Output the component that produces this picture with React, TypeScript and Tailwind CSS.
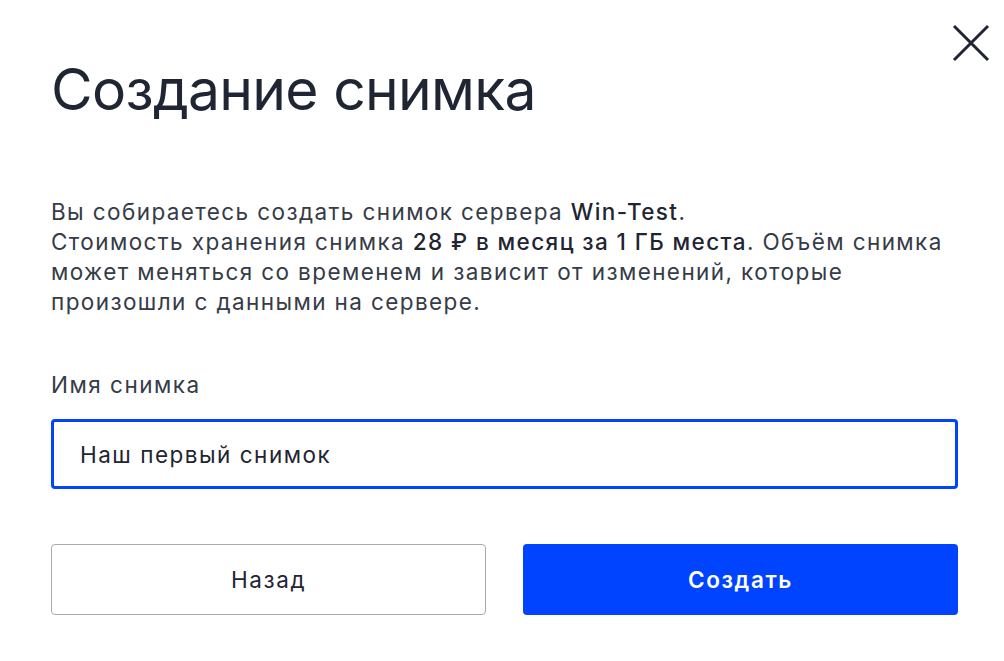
import { useState } from 'react';

export default function App() {
  const [name, setName] = useState('Наш первый снимок');

  return (
    <div className="relative w-[1004px] h-[661px] bg-white font-['Inter','Noto_Sans',sans-serif] text-[#1f2532]">
      {/* Close */}
      <button
        className="absolute top-[22px] right-[12px] w-[42px] h-[42px] flex items-center justify-center"
        aria-label="Закрыть"
      >
        <svg width="40" height="40" viewBox="0 0 40 40" fill="none">
          <path d="M3 3L37 37M37 3L3 37" stroke="#1f2532" strokeWidth="3" />
        </svg>
      </button>

      <div className="pl-[51px] pr-[46px] pt-[52px]">
        <h1 className="text-[57px] leading-[76px] font-normal tracking-[-0.7px]">Создание снимка</h1>

        <p className="mt-[69px] text-[22.5px] leading-[30px] tracking-[1.4px] text-[#353b47]">
          Вы собираетесь создать снимок сервера <span className="font-medium text-[#1f2532]">Win-Test</span>.
          <br />
          Стоимость хранения снимка{' '}
          <span className="font-medium text-[#1f2532]">28 ₽ в месяц за 1 ГБ места</span>. Объём снимка
          может меняться со временем и зависит от изменений, которые произошли с данными на сервере.
        </p>

        <label className="block mt-[53px] text-[22.5px] leading-[30px] tracking-[1.5px] text-[#353b47]">
          Имя снимка
        </label>
        <input
          value={name}
          onChange={(e) => setName(e.target.value)}
          autoFocus
          className="block mt-[19px] w-full h-[70px] px-[26px] border-[3px] border-[#0044ff] rounded-[4px] text-[22.5px] tracking-[1.5px] text-[#1f2532] outline-none caret-[#1f2532]"
        />

        <div className="mt-[55px] grid grid-cols-2 gap-[37px]">
          <button className="h-[71px] border border-[#a9abb0] rounded-[4px] text-[22.5px] tracking-[1.6px] text-[#1f2532]">
            Назад
          </button>
          <button className="h-[71px] bg-[#0044ff] rounded-[4px] text-[22.5px] tracking-[1.6px] font-semibold text-white">
            Создать
          </button>
        </div>
      </div>
    </div>
  );
}
